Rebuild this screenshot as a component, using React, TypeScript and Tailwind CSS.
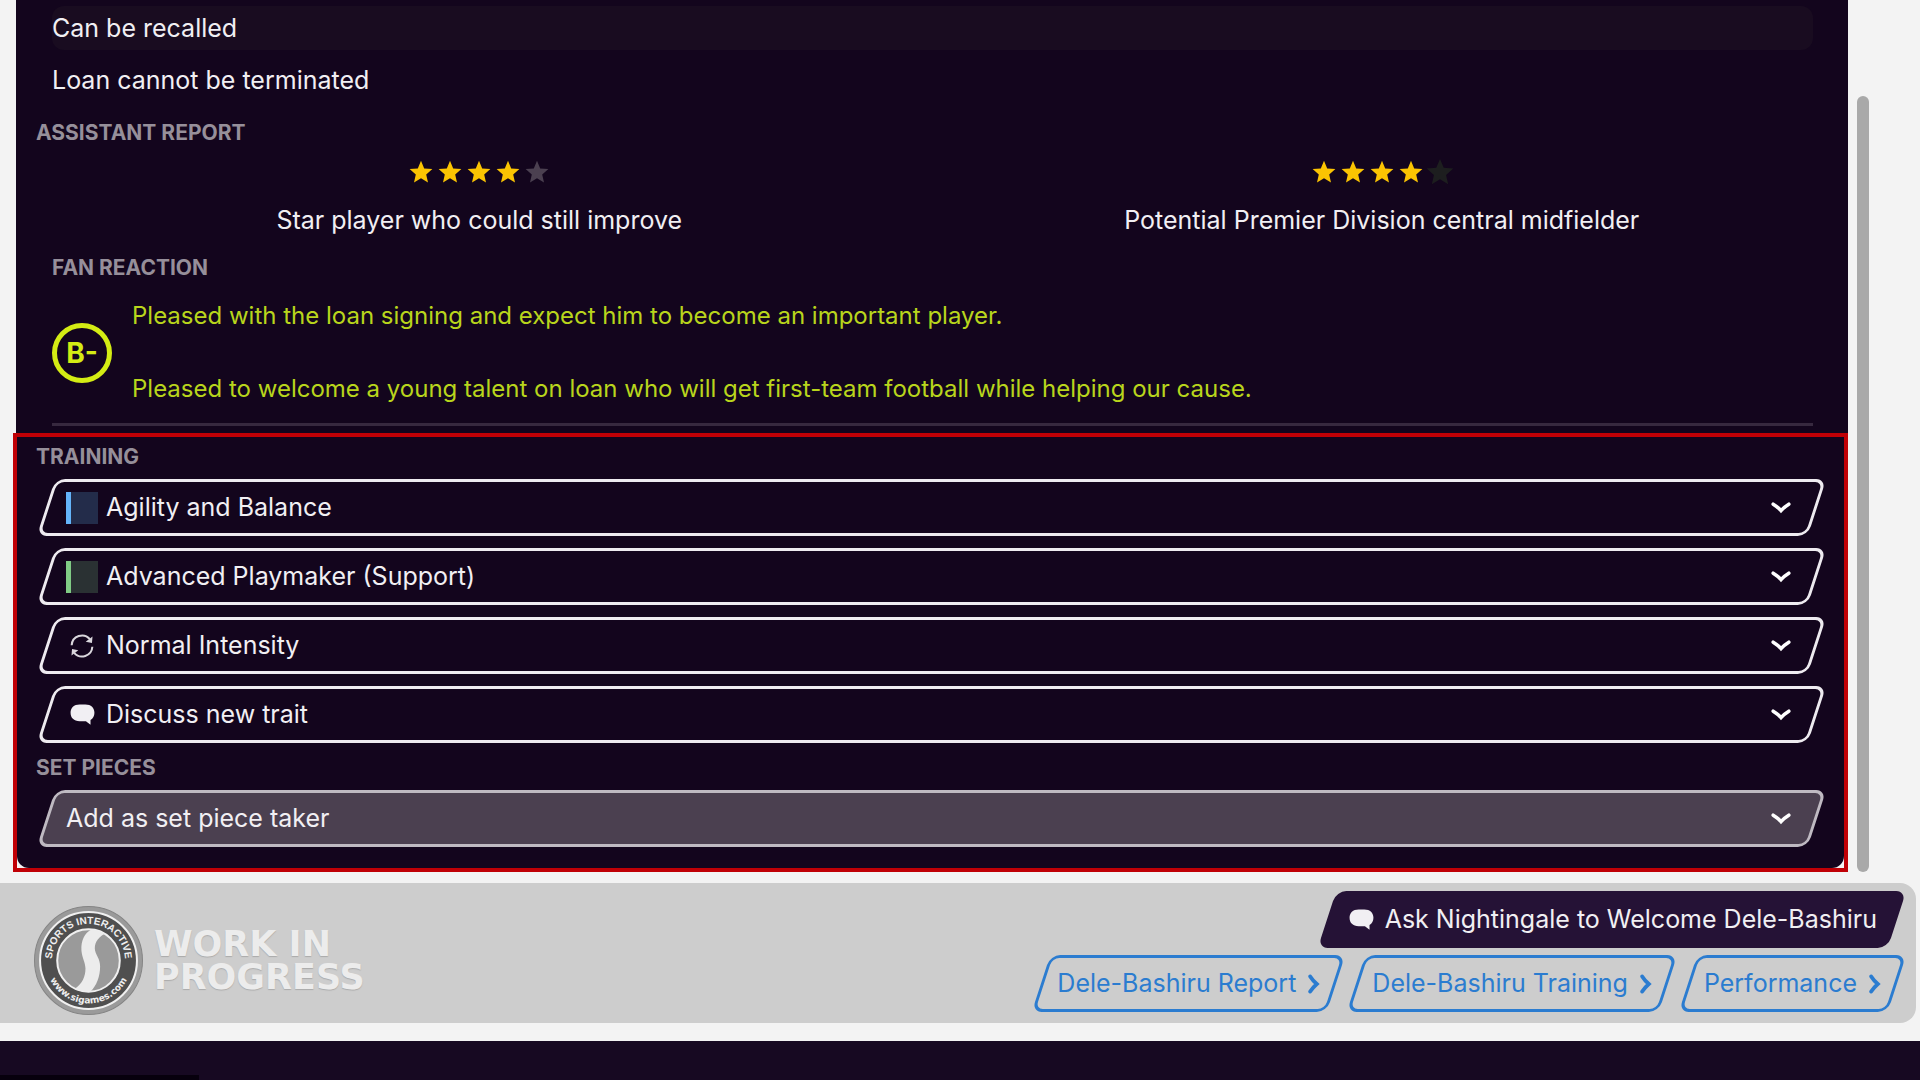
import React, { FC, ReactNode } from 'react';

import clsx from 'clsx';

type IconProps = { className?: string };

const ChevronDown: FC<IconProps> = ({ className }) => (
  <svg viewBox="0 0 20 12" className={className} aria-hidden="true">
    <path
      d="M2.2 2.2 Q6.5 4.8 10 8.6 Q13.5 4.8 17.8 2.2"
      fill="none"
      stroke="currentColor"
      strokeWidth="3.6"
      strokeLinecap="round"
      strokeLinejoin="miter"
    />
  </svg>
);

const ChevronRight: FC<IconProps> = ({ className }) => (
  <svg viewBox="0 0 12 20" className={className} aria-hidden="true">
    <path
      d="M2.2 2.4 Q4.8 6.5 8.8 10 Q4.8 13.5 2.2 17.6"
      fill="none"
      stroke="currentColor"
      strokeWidth="3.8"
      strokeLinecap="round"
    />
  </svg>
);

const Bubble: FC<IconProps> = ({ className }) => (
  <svg viewBox="0 0 26 22" className={className} aria-hidden="true">
    <path
      d="M10 0.5 H16 C22 0.5 25.5 4 25.5 9.2 C25.5 12.5 24 15.2 21.4 16.8 L21.4 21.8 L16.6 18 H10 C4 18 0.5 14.5 0.5 9.2 C0.5 4 4 0.5 10 0.5 Z"
      fill="currentColor"
    />
  </svg>
);

const Intensity: FC<IconProps> = ({ className }) => (
  <svg viewBox="0 0 26 26" className={className} aria-hidden="true">
    <g fill="none" stroke="currentColor" strokeWidth="2.2">
      <path d="M1.8 12.2 A11.2 11.2 0 0 1 21.5 5.6" />
      <path d="M24.2 13.8 A11.2 11.2 0 0 1 4.5 20.4" />
    </g>
    <path
      d="M24.4 2.6 L23.8 9.8 L17 8.4 Z M1.6 23.4 L2.2 16.2 L9 17.6 Z"
      fill="currentColor"
    />
  </svg>
);

const Star: FC<IconProps> = ({ className }) => (
  <svg viewBox="0 0 24 24" className={className} aria-hidden="true">
    <path
      d="M12 0.8 L15.2 8.4 L23.4 9.1 L17.2 14.5 L19 22.6 L12 18.3 L5 22.6 L6.8 14.5 L0.6 9.1 L8.8 8.4 Z"
      fill="currentColor"
    />
  </svg>
);

const StudioLogo: FC<IconProps> = ({ className }) => (
  <svg viewBox="0 0 108 108" className={className} aria-hidden="true">
    <defs>
      <path id="arc-top" d="M18.2 60 A36.3 36.3 0 1 1 89.8 60" />
      <path id="arc-bottom" d="M11.5 54 A42.5 42.5 0 0 0 96.5 54" />
    </defs>
    <circle cx="54" cy="54" r="53.5" fill="#9a9a9a" stroke="#858585" />
    <circle cx="54" cy="54" r="48" fill="#4f4f4f" stroke="#f0f0f0" strokeWidth="2" />
    <circle cx="54" cy="54" r="31" fill="#9a9a9a" stroke="#f0f0f0" strokeWidth="2" />
    <path
      d="M56.5 23.5 C62 23.5 67 25 70 27.5 C62 32 59.5 38 60.5 44 C61.5 49 65.5 52 65.5 60 C65.5 70 62 79 56 84.8 C50 85 44 84.5 40.5 82 C48 77 51 70 51 62 C51 56 47.5 51 47 44 C46.5 34 50 27 56.5 23.5 Z"
      fill="#ececec"
    />
    <g fill="#f0f0f0" textAnchor="middle">
      <text className="font-['Liberation_Sans'] font-bold" fontSize="10">
        <textPath href="#arc-top" startOffset="50%">
          SPORTS INTERACTIVE
        </textPath>
      </text>
      <text className="font-['DejaVu_Sans'] font-bold" fontSize="9">
        <textPath href="#arc-bottom" startOffset="50%">
          www.sigames.com
        </textPath>
      </text>
    </g>
  </svg>
);

type SlantedProps = { className?: string };

// Slanted plate behind a control, the control itself stays upright
const Slanted: FC<SlantedProps> = ({ className }) => (
  <span
    className={clsx(
      'absolute inset-0 -z-10 -skew-x-[18deg] rounded-[10px]',
      className,
    )}
  />
);

type HeadingProps = { className?: string; children: ReactNode };

const Heading: FC<HeadingProps> = ({ className, children }) => (
  <h2
    className={clsx(
      'text-[21px] leading-[28px] font-bold uppercase text-[#968f9a]',
      className,
    )}
  >
    {children}
  </h2>
);

type RatingProps = { filled: number; emptyClassName: string; label: string };

const Rating: FC<RatingProps> = ({ filled, emptyClassName, label }) => (
  <div className="flex flex-col items-center">
    <div className="flex h-6 items-center gap-[5px]">
      {[0, 1, 2, 3, 4].map(i => (
        <Star key={i} className={i < filled ? 'size-6 text-[#fbc402]' : emptyClassName} />
      ))}
    </div>
    <p className="mt-5 leading-[32px]">{label}</p>
  </div>
);

type SelectRowProps = {
  label: string;
  value: string;
  icon?: ReactNode;
  muted?: boolean;
};

const SelectRow: FC<SelectRowProps> = ({ label, value, icon, muted }) => (
  <div className="relative isolate flex h-[57px] items-center pl-5 pr-[26px]">
    <Slanted
      className={clsx(
        'border-[3px]',
        muted ? 'border-[#bfbac2] bg-[#4b4050]' : 'border-[#eeebf0]',
      )}
    />
    {icon && <span className="mr-2 flex w-8 justify-center">{icon}</span>}
    <select
      aria-label={label}
      className="h-full min-w-0 flex-1 cursor-pointer appearance-none bg-transparent outline-none"
    >
      <option>{value}</option>
    </select>
    <ChevronDown className="pointer-events-none h-3 w-5 text-white" />
  </div>
);

type SwatchProps = { className: string };

const Swatch: FC<SwatchProps> = ({ className }) => (
  <span className={clsx('size-8 border-l-[5px]', className)} />
);

const TRAINING_ROWS: SelectRowProps[] = [
  {
    label: 'Additional focus',
    value: 'Agility and Balance',
    icon: <Swatch className="border-[#64b4fa] bg-[#232c4a]" />,
  },
  {
    label: 'Playing position',
    value: 'Advanced Playmaker (Support)',
    icon: <Swatch className="border-[#80cb85] bg-[#2a3133]" />,
  },
  {
    label: 'Intensity',
    value: 'Normal Intensity',
    icon: <Intensity className="size-6 text-[#d9d6dc]" />,
  },
  {
    label: 'Traits',
    value: 'Discuss new trait',
    icon: <Bubble className="h-[21px] w-[25px]" />,
  },
];

const LINKS = ['Dele-Bashiru Report', 'Dele-Bashiru Training', 'Performance'];

export default function App() {
  return (
    <div className="flex min-h-screen flex-col bg-[#170922] font-['Inter',sans-serif] text-[25px] text-[#f1eff3]">
      <div className="bg-[#f3f3f3] pb-[18px]">
        <main className="flex pl-[13px]">
          <section className="min-w-0 flex-1">
            <div className="ml-[3px] bg-[#13051d] pl-[36px] pr-[35px] pt-[6px]">
              <p className="rounded-xl bg-[#190c20] leading-[44px]">Can be recalled</p>
              <p className="mt-2 leading-[44px]">Loan cannot be terminated</p>
              <Heading className="-ml-4 mt-[17px]">Assistant report</Heading>
              <div className="-ml-6 -mr-5 mt-[13px] grid grid-cols-2">
                <Rating
                  filled={4}
                  emptyClassName="size-6 text-[#4b4050]"
                  label="Star player who could still improve"
                />
                <Rating
                  filled={4}
                  emptyClassName="-mx-0.5 size-7 text-[#1d1e1f]"
                  label="Potential Premier Division central midfielder"
                />
              </div>
              <Heading className="mt-[18px]">Fan reaction</Heading>
              <div className="mt-[18px] flex items-center gap-5 text-[#b9d51c]">
                <div className="flex size-[60px] shrink-0 items-center justify-center rounded-full border-[5px] border-[#d4ec14] text-[28px] font-bold text-[#d4ec14]">
                  B-
                </div>
                <div className="space-y-[41px] text-[24px] leading-[32px]">
                  <p>Pleased with the loan signing and expect him to become an important player.</p>
                  <p>
                    Pleased to welcome a young talent on loan who will get first-team football
                    while helping our cause.
                  </p>
                </div>
              </div>
              <hr className="mt-[18px] border-t-[3px] border-[#37293f]" />
              <div className="h-[7px]" />
            </div>
            <div className="border-4 border-[#c00006]">
              <div className="rounded-b-xl bg-[#13051d] pb-[21px] pl-[29px] pr-[27px] pt-[6px]">
                <Heading className="-ml-[10px]">Training</Heading>
                <div className="mt-2 flex flex-col gap-3">
                  {TRAINING_ROWS.map(row => (
                    <SelectRow key={row.label} {...row} />
                  ))}
                </div>
                <Heading className="-ml-[10px] mt-[11px]">Set pieces</Heading>
                <div className="mt-2">
                  <SelectRow label="Set pieces" value="Add as set piece taker" muted />
                </div>
              </div>
            </div>
          </section>
          <div className="ml-[9px] mr-[51px] mt-24 w-3 rounded-full bg-[#a9a9a9]" />
        </main>

        <footer className="mr-1 mt-[11px] flex items-start justify-between rounded-r-2xl bg-[#cdcdcd] py-2 pl-[34px] pr-[19px]">
          <div className="flex items-center gap-[11px] pt-[15px]">
            <StudioLogo className="size-[109px]" />
            <p className="font-['DejaVu_Sans',sans-serif] text-[35px] leading-[33px] font-bold uppercase text-[#ececec] [text-shadow:0_1px_1px_#aaaaaa]">
              Work in
              <br />
              Progress
            </p>
          </div>
          <div className="flex flex-col items-end gap-[7px]">
            <button
              type="button"
              className="relative isolate flex h-[57px] cursor-pointer items-center gap-[11px] pl-[22px] pr-5"
            >
              <Slanted className="bg-[#251236]" />
              <Bubble className="h-[21px] w-[25px]" />
              Ask Nightingale to Welcome Dele-Bashiru
            </button>
            <nav className="flex gap-5">
              {LINKS.map(link => (
                <a
                  key={link}
                  href="#"
                  className="relative isolate flex h-[57px] items-center gap-3 px-4 text-[#2b7cd0]"
                >
                  <Slanted className="border-[3px] border-[#2b7cd0]" />
                  {link}
                  <ChevronRight className="h-5 w-3" />
                </a>
              ))}
            </nav>
          </div>
        </footer>
      </div>
      <div className="flex flex-1 items-end">
        <div className="h-[5px] w-[199px] bg-[#07000d]" />
      </div>
    </div>
  );
}
